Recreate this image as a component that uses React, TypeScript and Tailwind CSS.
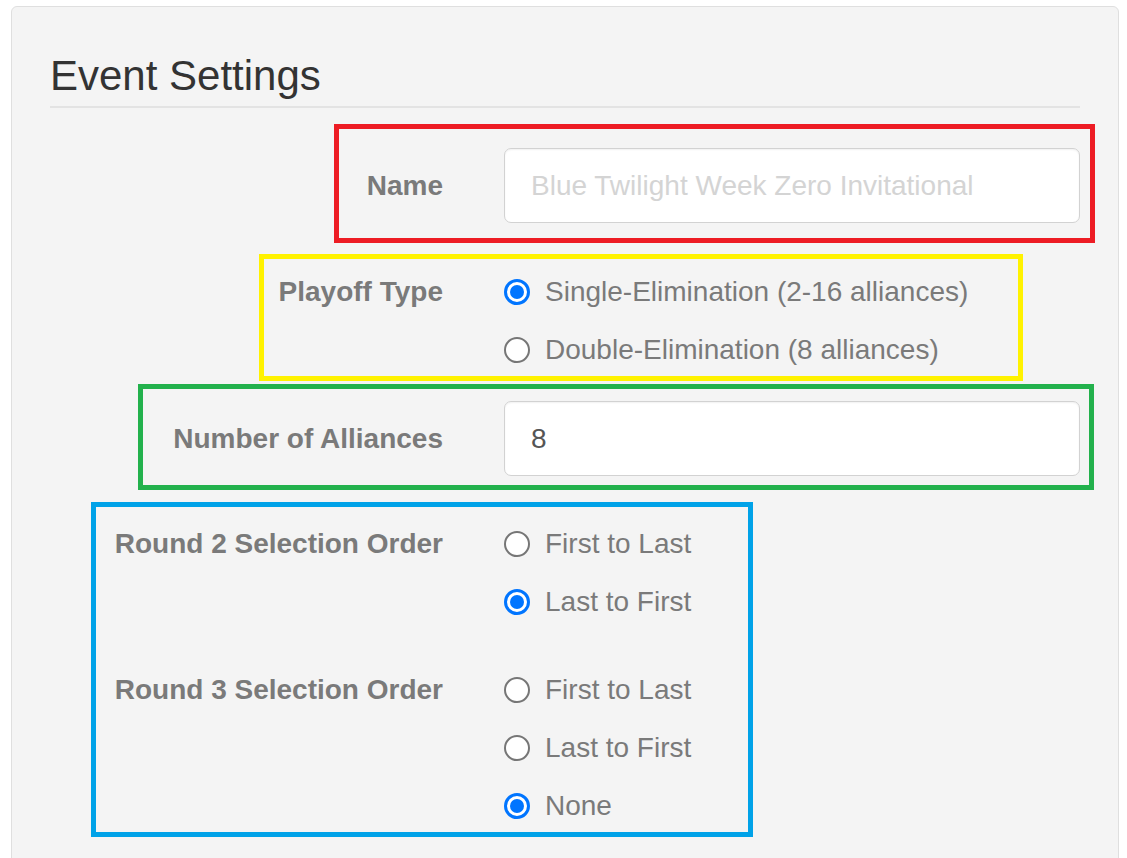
import React from "react";

const FONT = { fontFamily: '"Liberation Sans", Arial, Helvetica, sans-serif' };

function Radio({ checked = false, label }: { checked?: boolean; label: string }) {
  return (
    <div className="flex h-[58px] items-center">
      {checked ? (
        <span className="flex h-[26px] w-[26px] shrink-0 items-center justify-center rounded-full border-[3px] border-[#0075ff] bg-white">
          <span className="h-[14px] w-[14px] rounded-full bg-[#0075ff]" />
        </span>
      ) : (
        <span className="h-[26px] w-[26px] shrink-0 rounded-full border-2 border-[#767676] bg-white" />
      )}
      <span className="ml-[15px] whitespace-nowrap text-[#7a7a7a]">{label}</span>
    </div>
  );
}

function Label({ children, width }: { children: React.ReactNode; width: string }) {
  return (
    <div className={`flex h-[58px] shrink-0 items-center justify-end whitespace-nowrap font-bold text-[#7a7a7a] ${width}`}>
      {children}
    </div>
  );
}

export default function App() {
  return (
    <div className="min-h-[858px] bg-white pt-[6px] text-[28px]" style={FONT}>
      <div className="ml-[11px] h-[900px] w-[1108px] rounded-[6px] border border-[#dfdfdf] bg-[#f4f4f4] px-[38px] pt-[46px]">
        {/* Header */}
        <h3 className="text-[42px] font-normal leading-[46px] text-[#333]">Event Settings</h3>
        <div className="mt-[7px] h-[2px] bg-[#e3e3e3]" />

        {/* Name */}
        <div className="ml-[284px] mt-[16px] h-[119px] w-[761px] border-[5px] border-[#ed1c24] pt-[19px]">
          <div className="flex items-center">
            <div className="w-[104px] shrink-0 text-right font-bold text-[#7a7a7a]">Name</div>
            <input
              className="ml-[61px] h-[75px] w-[576px] shrink-0 rounded-[7px] border border-[#d2d2d2] bg-white px-[26px] text-[#555] shadow-[inset_0_1px_2px_rgba(0,0,0,0.06)] outline-none placeholder:text-[#d4d4d4]"
              placeholder="Blue Twilight Week Zero Invitational"
            />
          </div>
        </div>

        {/* Playoff type */}
        <div className="ml-[209px] mt-[11px] h-[127px] w-[764px] border-[5px] border-[#fff200] pt-[4px]">
          <div className="flex">
            <Label width="w-[179px]">Playoff Type</Label>
            <div className="ml-[61px]">
              <Radio checked label="Single-Elimination (2-16 alliances)" />
              <Radio label="Double-Elimination (8 alliances)" />
            </div>
          </div>
        </div>

        {/* Number of alliances */}
        <div className="ml-[88px] mt-[3px] h-[106px] w-[956px] border-[5px] border-[#22b14c] pt-[12px]">
          <div className="flex items-center">
            <div className="w-[300px] shrink-0 text-right font-bold text-[#7a7a7a]">Number of Alliances</div>
            <input
              className="ml-[61px] h-[75px] w-[576px] shrink-0 rounded-[7px] border border-[#d2d2d2] bg-white px-[26px] text-[#555] shadow-[inset_0_1px_2px_rgba(0,0,0,0.06)] outline-none"
              defaultValue="8"
            />
          </div>
        </div>

        {/* Selection order */}
        <div className="ml-[41px] mt-[12px] h-[335px] w-[662px] border-[5px] border-[#00a2e8] pt-[8px]">
          <div className="flex">
            <Label width="w-[347px]">Round 2 Selection Order</Label>
            <div className="ml-[61px]">
              <Radio label="First to Last" />
              <Radio checked label="Last to First" />
            </div>
          </div>
          <div className="mt-[30px] flex">
            <Label width="w-[347px]">Round 3 Selection Order</Label>
            <div className="ml-[61px]">
              <Radio label="First to Last" />
              <Radio label="Last to First" />
              <Radio checked label="None" />
            </div>
          </div>
        </div>
      </div>
    </div>
  );
}
